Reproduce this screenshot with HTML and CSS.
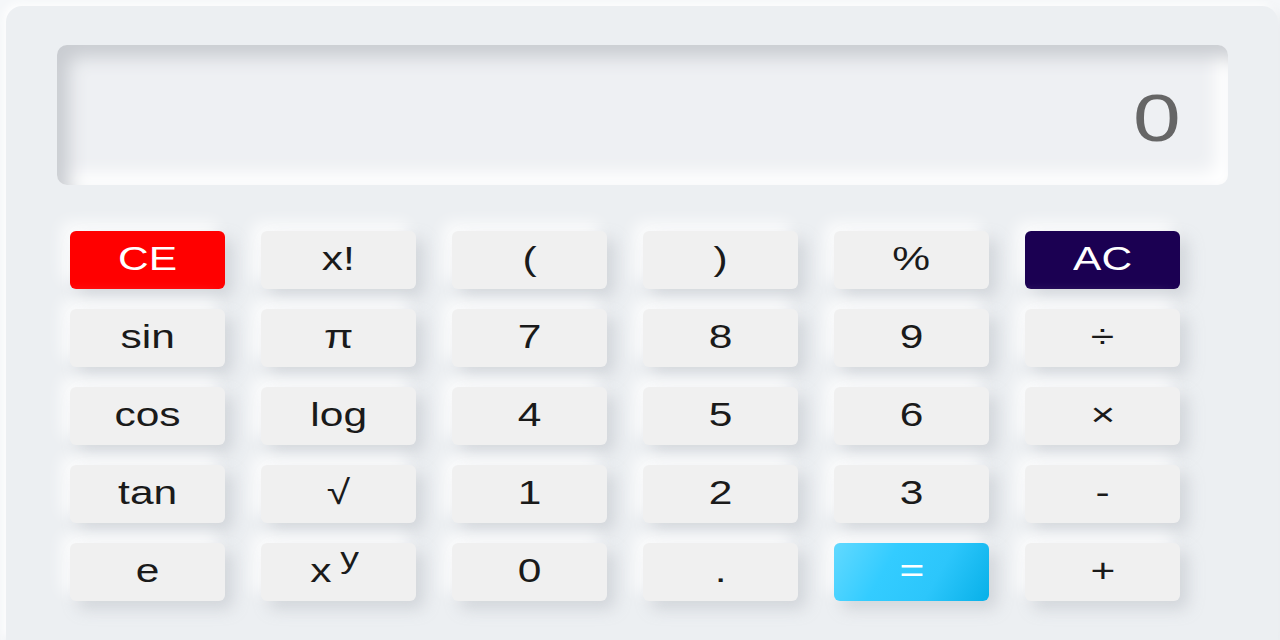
FILE: index.html
```html
<!DOCTYPE html>
<html>
<head>
<meta charset="utf-8">
<link rel="stylesheet" href="styles.css">
</head>
<body>
<div class="calc">
  <div class="display"><span class="readout">0</span></div>
  <div class="keys">
    <button class="key key-ce"><span class="lbl">CE</span></button>
    <button class="key"><span class="lbl">x!</span></button>
    <button class="key"><span class="lbl">(</span></button>
    <button class="key"><span class="lbl">)</span></button>
    <button class="key"><span class="lbl">%</span></button>
    <button class="key key-ac"><span class="lbl">AC</span></button>

    <button class="key"><span class="lbl">sin</span></button>
    <button class="key"><span class="lbl">π</span></button>
    <button class="key"><span class="lbl">7</span></button>
    <button class="key"><span class="lbl">8</span></button>
    <button class="key"><span class="lbl">9</span></button>
    <button class="key"><span class="lbl">÷</span></button>

    <button class="key"><span class="lbl">cos</span></button>
    <button class="key"><span class="lbl">log</span></button>
    <button class="key"><span class="lbl">4</span></button>
    <button class="key"><span class="lbl">5</span></button>
    <button class="key"><span class="lbl">6</span></button>
    <button class="key"><span class="lbl">×</span></button>

    <button class="key"><span class="lbl">tan</span></button>
    <button class="key"><span class="lbl">√</span></button>
    <button class="key"><span class="lbl">1</span></button>
    <button class="key"><span class="lbl">2</span></button>
    <button class="key"><span class="lbl">3</span></button>
    <button class="key"><span class="lbl">-</span></button>

    <button class="key"><span class="lbl">e</span></button>
    <button class="key"><span class="lbl">x<sup class="sup">y</sup></span></button>
    <button class="key"><span class="lbl">0</span></button>
    <button class="key"><span class="lbl">.</span></button>
    <button class="key key-eq"><span class="lbl">=</span></button>
    <button class="key"><span class="lbl">+</span></button>
  </div>
</div>
</body>
</html>
```

FILE: styles.css
```css
html, body {
  margin: 0;
  padding: 0;
}

body {
  background: #f5f7f9;
  overflow: hidden;
  width: 1280px;
  height: 640px;
  font-family: "Liberation Sans", Arial, sans-serif;
}

.calc {
  margin: 6px 0 0 6px;
  width: 1272px;
  height: 634px;
  box-sizing: border-box;
  padding: 39px 0 0 51px;
  background: #eceff2;
  border-radius: 16px 16px 0 0;
  box-shadow: -3px -3px 8px rgba(255, 255, 255, 0.9), 4px 4px 10px rgba(180, 186, 194, 0.25);
}

.display {
  width: 1171px;
  height: 140px;
  box-sizing: border-box;
  border-radius: 10px;
  background: #eef0f3;
  box-shadow: inset 12px 12px 18px #c9ccd1, inset -12px -12px 18px #ffffff;
  display: flex;
  align-items: center;
  justify-content: flex-end;
  padding: 0 47px 0 0;
}

.readout {
  display: inline-block;
  font-size: 66px;
  line-height: 1;
  color: #666666;
  transform: scaleX(1.3);
  transform-origin: right center;
  margin-top: 6px;
}

.keys {
  margin: 46px 0 0 13px;
  display: grid;
  grid-template-columns: repeat(6, 155px);
  grid-auto-rows: 58px;
  column-gap: 36px;
  row-gap: 20px;
}

.key {
  border: none;
  margin: 0;
  padding: 0;
  background: #f0f0f0;
  border-radius: 6px;
  box-shadow: 8px 8px 16px rgba(160, 166, 176, 0.35), -8px -8px 16px rgba(255, 255, 255, 0.9);
  font-family: "Liberation Sans", Arial, sans-serif;
  font-size: 34px;
  color: #1a1a1a;
  display: flex;
  align-items: center;
  justify-content: center;
  line-height: 1;
}

.lbl {
  display: inline-block;
  transform: scaleX(1.25);
  margin-top: -4px;
}

.sup {
  font-size: 30px;
  vertical-align: 14px;
  line-height: 0;
  margin-left: 7px;
  margin-right: 7px;
}

.key-ce {
  background: #ff0000;
  color: #ffffff;
}

.key-ac {
  background: #1b0052;
  color: #ffffff;
}

.key-eq {
  background: linear-gradient(120deg, #62d9ff 0%, #33ccff 35%, #2cc6fb 65%, #08b0e8 100%);
  color: #ffffff;
}
```
